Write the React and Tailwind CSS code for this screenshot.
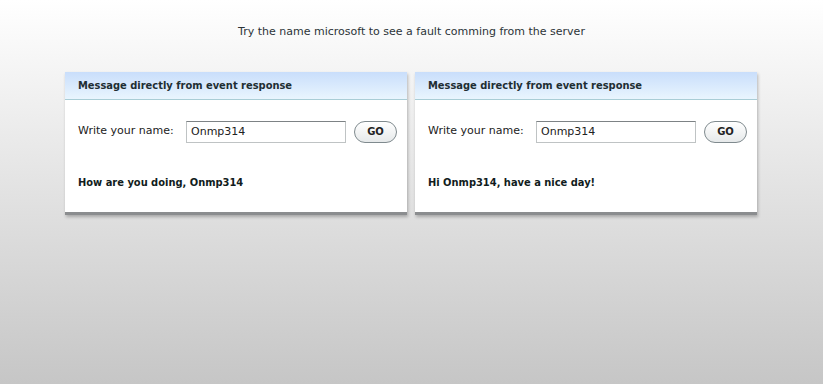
import React, { useState } from 'react';

const Panel = ({ initial, message }) => {
  const [name, setName] = useState(initial);

  return (
    <div className="w-[342px] bg-white shadow-[1px_2px_3px_rgba(0,0,0,0.25)]">
      <div className="h-[28px] flex items-center pt-[3px] px-[13px] bg-gradient-to-b from-[#c9defb] to-[#e9f5fe] border-b border-[#a9cdd6]">
        <span className="text-[11px] font-bold text-[#1e2e33] font-['DejaVu_Sans_Condensed',sans-serif]">Message directly from event response</span>
      </div>
      <div className="pl-[13px] pr-[10px] pt-[21px] pb-[21px]">
        <div className="flex items-center">
          <span className="shrink-0 text-[11px] text-[#222] w-[108px] -mt-[1px]">Write your name:</span>
          <input
            value={name}
            onChange={(e) => setName(e.target.value)}
            className="shrink-0 w-[160px] h-[22px] border border-[#bfc3c4] border-t-[#7d8285] px-[4px] text-[11px] text-[#222] outline-none"
          />
          <button className="shrink-0 ml-[8px] w-[43px] h-[22px] rounded-full border border-[#7f8a8e] bg-gradient-to-b from-white to-[#e6e9ea] text-[10px] font-bold text-[#222]">
            GO
          </button>
        </div>
        <p className="mt-[32px] text-[11px] font-bold text-[#111c20] font-['DejaVu_Sans_Condensed',sans-serif]">{message}</p>
      </div>
      <div className="h-[3px] bg-[#8b8d8f]" />
    </div>
  );
};

export default function App() {
  return (
    <div className="min-h-[384px] bg-gradient-to-b from-[#ffffff] to-[#c6c6c6] font-['DejaVu_Sans',sans-serif] pt-[24px]">
      <p className="text-center text-[11px] text-[#2c3438]">
        Try the name microsoft to see a fault comming from the server
      </p>
      <div className="flex gap-[8px] mt-[31px] px-[65px]">
        <Panel initial="Onmp314" message="How are you doing, Onmp314" />
        <Panel initial="Onmp314" message="Hi Onmp314, have a nice day!" />
      </div>
    </div>
  );
}
